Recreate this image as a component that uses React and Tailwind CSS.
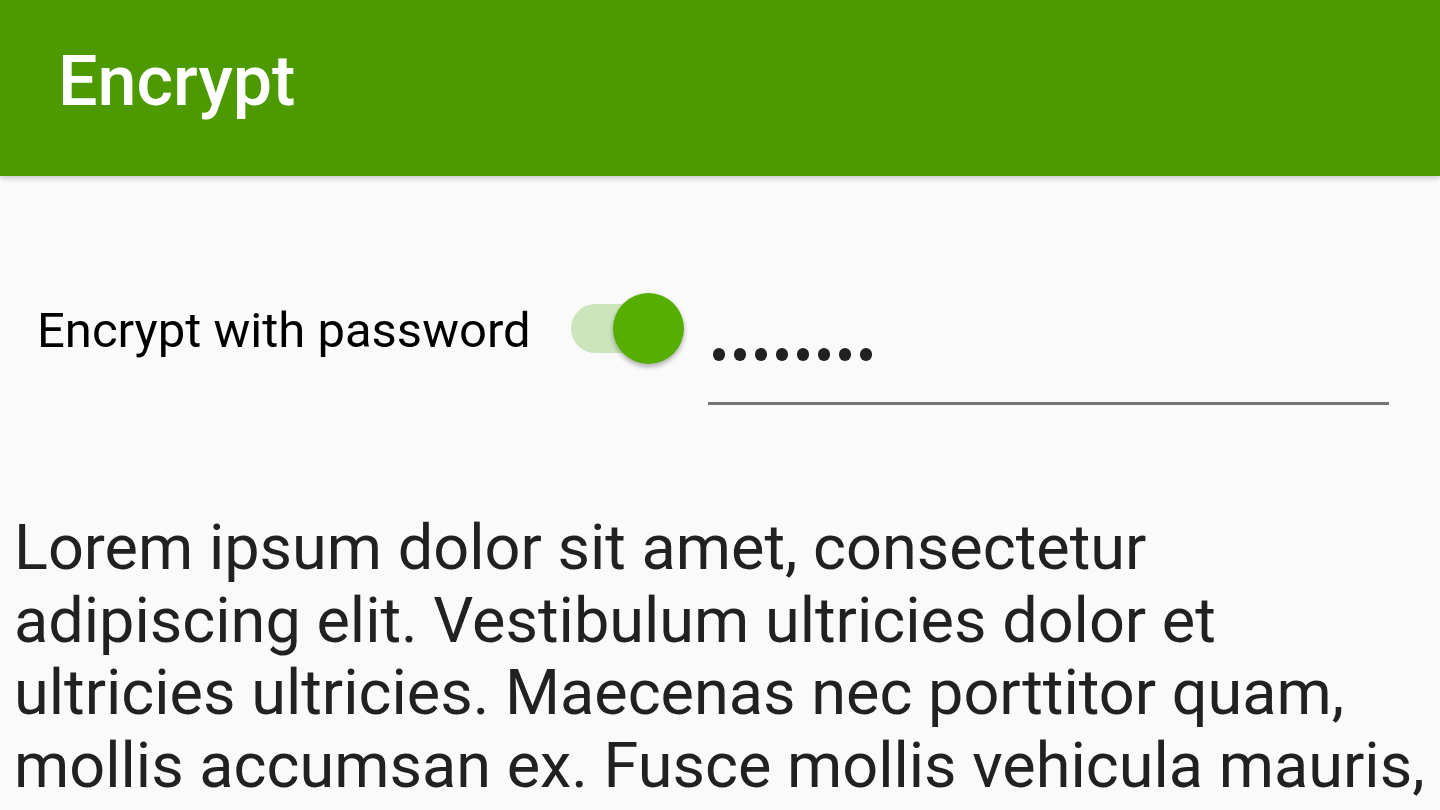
export default function App() {
  const body =
    "Lorem ipsum dolor sit amet, consectetur adipiscing elit. Vestibulum ultricies dolor et ultricies ultricies. Maecenas nec porttitor quam, mollis accumsan ex. Fusce mollis vehicula mauris, in pretium nisl posuere vel.";

  return (
    <div className="w-[1440px] h-[810px] overflow-hidden bg-[#fafafa] font-['Roboto',sans-serif]">
      {/* app bar */}
      <header className="relative z-10 h-[176px] bg-[#4c9a00] flex items-center pl-[58px] shadow-[0_2px_6px_rgba(0,0,0,0.22)]">
        <h1 className="text-[70px] font-medium text-white leading-none -mt-[14px]">Encrypt</h1>
      </header>

      {/* password row */}
      <div className="flex items-start pt-[117px] h-[228px]">
        <span className="ml-[37px] mt-[10px] text-[49px] leading-[56px] text-black">Encrypt with password</span>

        <div className="relative ml-[40px] w-[114px] h-[71px]">
          <div className="absolute left-0 top-[11px] w-[100px] h-[49px] rounded-full bg-[#cde5bd]" />
          <div className="absolute left-[42px] top-0 w-[71px] h-[71px] rounded-full bg-[#56ae00] shadow-[0_3px_5px_rgba(0,0,0,0.3)]" />
        </div>

        <div className="ml-[23px] w-[681px] flex flex-col">
          <div className="h-[109px] flex items-center pl-[5px] pt-[14px] gap-[8.5px]">
            {Array.from({ length: 8 }).map((_, i) => (
              <span key={i} className="w-[12.5px] h-[12.5px] rounded-full bg-[#212121]" />
            ))}
          </div>
          <div className="h-[3px] bg-[#757575]" />
        </div>
      </div>

      {/* body text */}
      <p className="pl-[14px] pr-0 mt-[108px] text-[63px] leading-[72.5px] text-[#212121]">{body}</p>
    </div>
  );
}
